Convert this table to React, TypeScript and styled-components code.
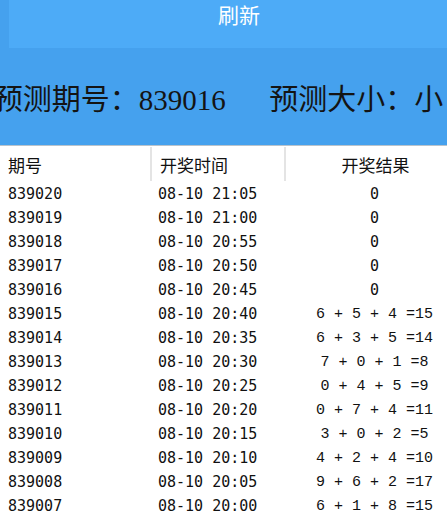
import React from "react";
import styled, { createGlobalStyle } from "styled-components";

const GlobalStyle = createGlobalStyle`
  html, body { margin: 0; padding: 0; background: #ffffff; overflow: hidden; }
  body { font-family: "Liberation Sans", "Noto Sans CJK SC", sans-serif; }
`;

const Page = styled.div`
  width: 447px;
  display: flex;
  flex-direction: column;
  overflow: hidden;
`;

const TopPanel = styled.div`
  height: 145px;
  background: #45a1ee;
  border-bottom: 1px solid #b9c3cc;
  display: flex;
  flex-direction: column;
`;

const RefreshButton = styled.button`
  margin-left: 9px;
  width: calc(100% + 13px);
  height: 48px;
  border: none;
  background: #4dabf7;
  color: #ffffff;
  font-family: "Noto Sans CJK SC", sans-serif;
  font-size: 21px;
  line-height: 28px;
  padding: 0;
  display: flex;
  justify-content: center;
  align-items: flex-start;
`;

const Prediction = styled.div`
  flex: 1;
  display: flex;
  justify-content: center;
  align-items: center;
  white-space: pre;
  font-family: "Liberation Serif", "Noto Sans CJK SC", serif;
  font-size: 29px;
  color: #141414;
  padding-right: 10px;
`;

const Table = styled.div`
  display: flex;
  flex-direction: column;
`;

const HeaderRow = styled.div`
  display: grid;
  grid-template-columns: 150px 134px 1fr;
  height: 36px;
  align-items: stretch;
  font-family: "Noto Sans CJK SC", sans-serif;
  font-size: 17px;
  color: #111;
`;

const HeaderCell = styled.div<{ $center?: boolean; $divider?: boolean }>`
  display: flex;
  align-items: center;
  justify-content: ${(p) => (p.$center ? "center" : "flex-start")};
  padding-left: ${(p) => (p.$center ? "18px" : "8px")};
  border-left: ${(p) => (p.$divider ? "2px solid #e4e4e4" : "none")};
  margin: 1px 0 1px 0;
`;

const Row = styled.div`
  display: grid;
  grid-template-columns: 150px 134px 1fr;
  height: 24px;
  align-items: center;
  font-family: "DejaVu Sans Mono", "Liberation Mono", monospace;
  font-size: 15px;
  color: #111;
`;

const Cell = styled.div<{ $center?: boolean }>`
  white-space: pre;
  text-align: ${(p) => (p.$center ? "center" : "left")};
  padding-left: ${(p) => (p.$center ? "18px" : "8px")};
`;

const Result = styled(Cell)<{ $formula?: boolean }>`
  font-family: ${(p) =>
    p.$formula
      ? `"Liberation Mono", "Liberation Serif", monospace`
      : `"DejaVu Sans Mono", monospace`};
`;

const rows: [string, string, string][] = [
  ["839020", "08-10 21:05", "0"],
  ["839019", "08-10 21:00", "0"],
  ["839018", "08-10 20:55", "0"],
  ["839017", "08-10 20:50", "0"],
  ["839016", "08-10 20:45", "0"],
  ["839015", "08-10 20:40", "6 + 5 + 4 =15"],
  ["839014", "08-10 20:35", "6 + 3 + 5 =14"],
  ["839013", "08-10 20:30", "7 + 0 + 1 =8"],
  ["839012", "08-10 20:25", "0 + 4 + 5 =9"],
  ["839011", "08-10 20:20", "0 + 7 + 4 =11"],
  ["839010", "08-10 20:15", "3 + 0 + 2 =5"],
  ["839009", "08-10 20:10", "4 + 2 + 4 =10"],
  ["839008", "08-10 20:05", "9 + 6 + 2 =17"],
  ["839007", "08-10 20:00", "6 + 1 + 8 =15"],
];

export default function App() {
  return (
    <Page>
      <GlobalStyle />
      <TopPanel>
        <RefreshButton>刷新</RefreshButton>
        <Prediction>{"预测期号：839016      预测大小：小"}</Prediction>
      </TopPanel>
      <Table>
        <HeaderRow>
          <HeaderCell>期号</HeaderCell>
          <HeaderCell $divider>开奖时间</HeaderCell>
          <HeaderCell $divider $center>开奖结果</HeaderCell>
        </HeaderRow>
        {rows.map(([no, time, res]) => (
          <Row key={no}>
            <Cell>{no}</Cell>
            <Cell>{time}</Cell>
            <Result $center $formula={res.length > 1}>{res}</Result>
          </Row>
        ))}
      </Table>
    </Page>
  );
}
